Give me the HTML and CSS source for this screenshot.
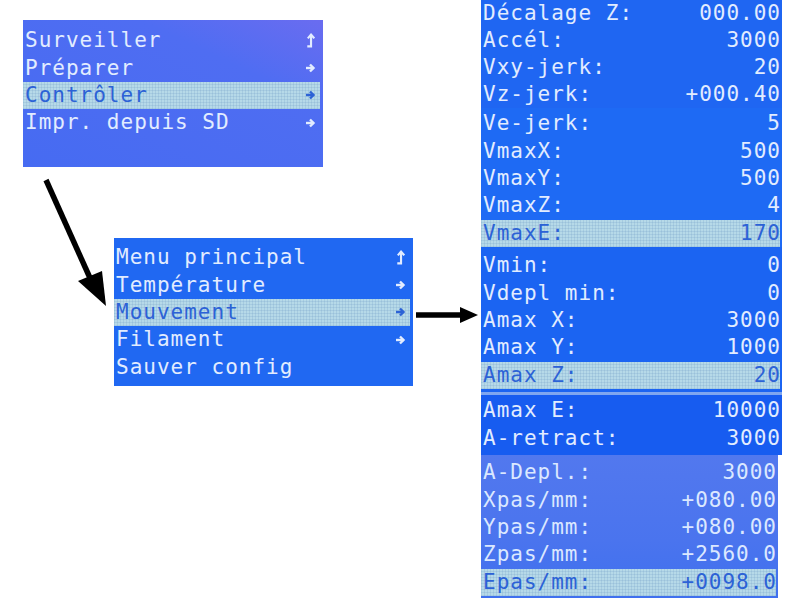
FILE: index.html
```html
<!DOCTYPE html>
<html lang="fr">
<head>
<meta charset="utf-8">
<title>Menus LCD</title>
<link rel="stylesheet" href="styles.css">
</head>
<body>
<div class="canvas">

  <div class="lcd lcd-main">
    <div class="row"><span>Surveiller</span><svg class="ico" viewBox="0 0 8 14"><path d="M4.5 1.5 L4.5 12.5 L1 12.5" /><path d="M1.5 5 L4.5 1.5 L7.5 5" /></svg></div>
    <div class="row"><span>Préparer</span><svg class="ico-r" viewBox="0 0 10 10"><path d="M0 5 H7.5" /><path d="M4 1.5 L7.5 5 L4 8.5" /></svg></div>
    <div class="row sel"><span>Contrôler</span><svg class="ico-r" viewBox="0 0 10 10"><path d="M0 5 H7.5" /><path d="M4 1.5 L7.5 5 L4 8.5" /></svg></div>
    <div class="row"><span>Impr. depuis SD</span><svg class="ico-r" viewBox="0 0 10 10"><path d="M0 5 H7.5" /><path d="M4 1.5 L7.5 5 L4 8.5" /></svg></div>
  </div>

  <div class="lcd lcd-control">
    <div class="row"><span>Menu principal</span><svg class="ico" viewBox="0 0 8 14"><path d="M4.5 1.5 L4.5 12.5 L1 12.5" /><path d="M1.5 5 L4.5 1.5 L7.5 5" /></svg></div>
    <div class="row"><span>Température</span><svg class="ico-r" viewBox="0 0 10 10"><path d="M0 5 H7.5" /><path d="M4 1.5 L7.5 5 L4 8.5" /></svg></div>
    <div class="row sel"><span>Mouvement</span><svg class="ico-r" viewBox="0 0 10 10"><path d="M0 5 H7.5" /><path d="M4 1.5 L7.5 5 L4 8.5" /></svg></div>
    <div class="row"><span>Filament</span><svg class="ico-r" viewBox="0 0 10 10"><path d="M0 5 H7.5" /><path d="M4 1.5 L7.5 5 L4 8.5" /></svg></div>
    <div class="row"><span>Sauver config</span></div>
  </div>

  <div class="lcd-stack">
    <div class="seg seg1">
      <div class="row"><span>Décalage Z:</span><span class="val">000.00</span></div>
      <div class="row"><span>Accél:</span><span class="val">3000</span></div>
      <div class="row"><span>Vxy-jerk:</span><span class="val">20</span></div>
      <div class="row"><span>Vz-jerk:</span><span class="val">+000.40</span></div>
    </div>
    <div class="seg seg2">
      <div class="row"><span>Ve-jerk:</span><span class="val">5</span></div>
      <div class="row"><span>VmaxX:</span><span class="val">500</span></div>
      <div class="row"><span>VmaxY:</span><span class="val">500</span></div>
      <div class="row"><span>VmaxZ:</span><span class="val">4</span></div>
      <div class="row sel"><span>VmaxE:</span><span class="val">170</span></div>
    </div>
    <div class="seg seg3">
      <div class="row"><span>Vmin:</span><span class="val">0</span></div>
      <div class="row"><span>Vdepl min:</span><span class="val">0</span></div>
      <div class="row"><span>Amax X:</span><span class="val">3000</span></div>
      <div class="row"><span>Amax Y:</span><span class="val">1000</span></div>
      <div class="row sel"><span>Amax Z:</span><span class="val">20</span></div>
    </div>
    <div class="seg seg4">
      <div class="row"><span>Amax E:</span><span class="val">10000</span></div>
      <div class="row"><span>A-retract:</span><span class="val">3000</span></div>
    </div>
    <div class="seg seg5">
      <div class="row"><span>A-Depl.:</span><span class="val">3000</span></div>
      <div class="row"><span>Xpas/mm:</span><span class="val">+080.00</span></div>
      <div class="row"><span>Ypas/mm:</span><span class="val">+080.00</span></div>
      <div class="row"><span>Zpas/mm:</span><span class="val">+2560.0</span></div>
      <div class="row sel"><span>Epas/mm:</span><span class="val">+0098.0</span></div>
    </div>
  </div>

  <svg class="arrow arrow-down" viewBox="0 0 80 135">
    <path d="M4 2 L48 100" />
    <polygon points="64,128 36,103 60,93" />
  </svg>
  <svg class="arrow arrow-right" viewBox="0 0 64 20">
    <path d="M0 10 H48" />
    <polygon points="62,10 44,2 44,18" />
  </svg>

</div>
</body>
</html>
```

FILE: styles.css
```css
html, body {
  margin: 0;
  padding: 0;
  background: #ffffff;
}

.canvas {
  position: relative;
  width: 800px;
  height: 600px;
  overflow: hidden;
  background: #ffffff;
  font-family: "DejaVu Sans Mono", "Liberation Mono", monospace;
  font-size: 21px;
  letter-spacing: 1px;
  color: #e2ecff;
}

.lcd {
  position: absolute;
  box-sizing: border-box;
  display: flex;
  flex-direction: column;
  padding-left: 2px;
  padding-right: 3px;
}

.lcd-main {
  left: 23px;
  top: 20px;
  width: 300px;
  height: 147px;
  padding-top: 7px;
  background: linear-gradient(205deg, #6a6cf0 0%, #4f6df2 30%, #466bf2 100%);
}

.lcd-control {
  left: 114px;
  top: 238px;
  width: 299px;
  height: 148px;
  padding-top: 6px;
  background: #2068f2;
}

.row {
  height: 27.4px;
  display: flex;
  align-items: center;
  justify-content: space-between;
  white-space: pre;
  line-height: 1;
}

.row.sel {
  color: #2c62d6;
  background-color: #b6d9e8;
  background-image:
    linear-gradient(90deg, rgba(120, 160, 200, 0.25) 1px, transparent 1px),
    linear-gradient(0deg, rgba(120, 160, 200, 0.25) 1px, transparent 1px);
  background-size: 3px 3px;
  margin-left: -2px;
  padding-left: 2px;
}

.ico {
  width: 9px;
  height: 15px;
  margin-right: 5px;
  fill: none;
  stroke: currentColor;
  stroke-width: 2;
}

.ico-r {
  width: 10px;
  height: 10px;
  margin-right: 4px;
  fill: none;
  stroke: currentColor;
  stroke-width: 2.4;
}

.lcd-stack {
  position: absolute;
  left: 481px;
  top: 0;
  width: 301px;
  display: flex;
  flex-direction: column;
}

.seg {
  box-sizing: border-box;
  display: flex;
  flex-direction: column;
  padding-left: 2px;
  padding-right: 2px;
}

.val {
  margin-right: -1px;
}

.seg1 {
  height: 108px;
  padding-top: 0;
  background: #1f66f2;
}

.seg2 {
  height: 139px;
  padding-top: 2px;
  background: #1e6af4;
}

.seg3 {
  height: 148px;
  padding-top: 5px;
  background: #1b64f2;
  border-bottom: 3px solid #7fa6f0;
}

.seg4 {
  height: 60px;
  padding-top: 2px;
  background: #175cf0;
}

.seg5 {
  height: 143px;
  padding-top: 4px;
  width: 297px;
  background: linear-gradient(180deg, #5278ee 0%, #4a74ee 60%, #3f70ee 100%);
  color: #dbe8ff;
}

.arrow {
  position: absolute;
  fill: #000000;
  stroke: #000000;
}

.arrow path {
  stroke-width: 5.5;
  fill: none;
}

.arrow polygon {
  stroke: none;
}

.arrow-down {
  left: 42px;
  top: 178px;
  width: 80px;
  height: 135px;
}

.arrow-right {
  left: 416px;
  top: 305px;
  width: 64px;
  height: 20px;
}
```
